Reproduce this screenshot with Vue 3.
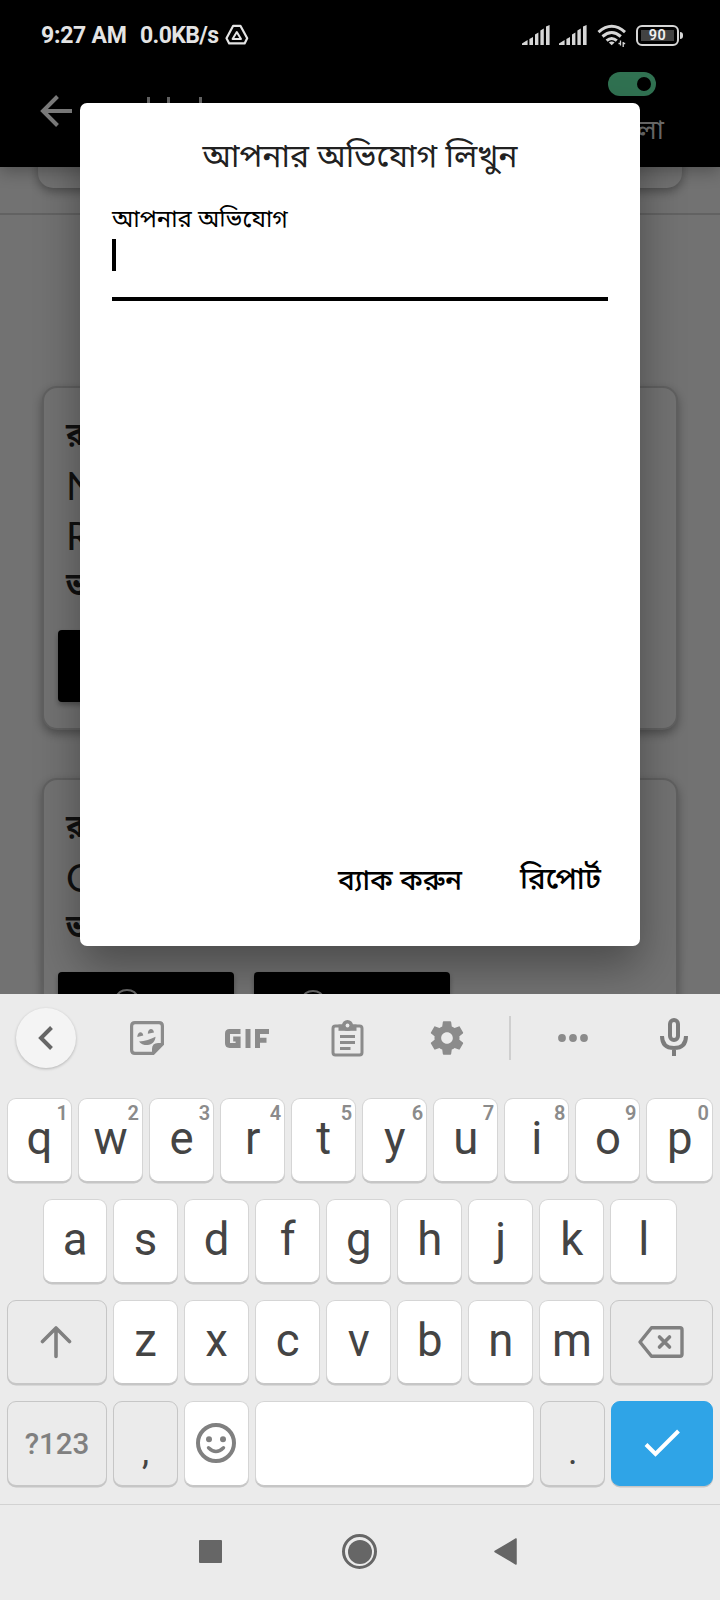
<script setup>
const topRow = [...'qwertyuiop'].map((c, i) => ({ c, n: (i + 1) % 10 }))
const midRow = [...'asdfghjkl']
const lowRow = [...'zxcvbnm']
</script>

<template>
  <div class="screen">
    <header class="top">
      <div class="status">
        <span class="time">9:27 AM</span>
        <span class="speed">0.0KB/s</span>
        <svg class="drive" width="24" height="22" viewBox="0 0 24 22" fill="none" stroke="#e4e4e4" stroke-linejoin="round">
          <path d="M8.200 1.800h7.200l6.800 12.400-2.600 5.200H4.200L1.500 14.200z" stroke-width="2.200" />
          <path d="M11.800 8l4.200 7H7.600z" stroke-width="2" />
        </svg>
        <span class="grow"></span>
        <svg v-for="k in 2" :key="k" class="signal" width="28" height="20" viewBox="0 0 28 20" fill="#d6d6d6">
          <path d="M0 20v-1.600L5.600 15v5zM7.400 14l3.600-2v8H7.400zM13 9.600l3.400-2V20H13zM18.400 5.600L21.800 3.600V20h-3.400zM24 1.600L27.600 0v20H24z" />
        </svg>
        <svg class="wifi" width="30" height="24" viewBox="0 0 30 24" fill="none" stroke="#d6d6d6" stroke-width="3">
          <path d="M1.500 8.200Q14.700-3.600 28 8.200" />
          <path d="M5.500 12.500Q14.700 4.500 23.800 12.500" />
          <path d="M9.600 16.600Q14.700 12.300 19.800 16.600" />
          <path d="M11.800 18.400Q14.700 16.400 17.600 18.400L14.700 21.200z" fill="#d6d6d6" stroke="none" />
          <path d="M23.500 16.500v5M26.200 18v5M21.500 19.500h2M26.200 19.500h2" stroke-width="1.300" />
        </svg>
        <span class="battery"><span class="level">90</span></span>
        <span class="cap"></span>
      </div>
      <div class="appbar">
        <svg class="back" width="32" height="32" viewBox="0 0 32 32" fill="none" stroke="#7a7a7a" stroke-width="4">
          <path d="M32 16H3M17.500 1.500L3 16l14.500 14.500" />
        </svg>
        <div class="title-tips"><i></i><i></i><i></i></div>
        <div class="lang">
          <span class="toggle"><span class="knob"></span></span>
          <span class="lang-name bn">বাংলা</span>
        </div>
      </div>
    </header>

    <main class="content">
      <section class="card stub"></section>
      <hr class="rule" />
      <section class="card first">
        <p class="bn strong">রক্তের গ্রুপ</p>
        <p class="latin">Name</p>
        <p class="latin">Rh</p>
        <p class="bn strong">ভর্তি</p>
        <div class="actions"><span class="action"></span></div>
      </section>
      <section class="card second">
        <p class="bn strong">রক্তের গ্রুপ</p>
        <p class="latin">O</p>
        <p class="bn strong">ভর্তি</p>
        <div class="actions">
          <span class="action"><i class="arc"></i></span>
          <span class="action wide"><i class="arc"></i></span>
        </div>
      </section>
    </main>

    <div class="dialog">
      <h1 class="bn heading">আপনার অভিযোগ লিখুন</h1>
      <label class="bn label">আপনার অভিযোগ</label>
      <div class="field"><span class="caret"></span></div>
      <div class="buttons">
        <span class="bn cancel">ব্যাক করুন</span>
        <span class="bn report">রিপোর্ট</span>
      </div>
    </div>

    <div class="keyboard">
      <div class="tools">
        <span class="round">
          <svg width="16" height="24" viewBox="0 0 16 24" fill="none" stroke="#666" stroke-width="4"><path d="M13.500 1.500L3 12l10.500 10.500" /></svg>
        </span>
        <svg class="t-sticker" width="34" height="34" viewBox="0 0 34 34">
          <path d="M5 1.600h24q3.400 0 3.400 3.400v18.200l-9.200 9.200H5q-3.400 0-3.400-3.400V5q0-3.400 3.400-3.400z" fill="none" stroke="#8b8b8b" stroke-width="3.200" />
          <path d="M22 33v-5q0-6 6-6h5L23 33z" fill="#8b8b8b" />
          <path d="M7.300 16C7.300 10.500 12.500 9.500 13.300 14.400zM17.800 12.800C17.800 7 23.300 6.500 24 11.400zM9 20.400Q18 20 25.500 15.800C25.500 20 22 24 17.500 24 13.500 24 10.500 22.800 9 20.400z" fill="#8b8b8b" />
        </svg>
        <svg class="t-gif" width="44" height="19" viewBox="0 0 44 19" fill="none" stroke="#8b8b8b" stroke-width="5">
          <path d="M15.500 2.600H4.600Q2.500 2.600 2.500 4.700v9.600q0 2.100 2.100 2.100h8.500V10H8.200" />
          <path d="M23 0v19M32.500 19V2.600H44M32 11.200h9.500" />
        </svg>
        <svg class="t-clip" width="33" height="37" viewBox="0 0 33 37" fill="none" stroke="#8b8b8b" stroke-width="3">
          <rect x="2" y="6" width="29" height="29" rx="2.500" />
          <path d="M7.500 4.500h18v6.300h-18z" fill="#8b8b8b" stroke="none" />
          <circle cx="16.500" cy="5.500" r="5.500" fill="#8b8b8b" stroke="none" /><circle cx="16.500" cy="5.500" r="1.900" fill="#ebebeb" stroke="none" />
          <path d="M9 16.600h15M9 22.400h15M9 28.400h10.500" />
        </svg>
        <svg class="t-gear" width="40" height="40" viewBox="0 0 24 24" fill="#8b8b8b"><path d="M19.430 12.980c.04-.32.07-.64.07-.98s-.03-.66-.07-.98l2.110-1.650c.19-.15.24-.42.12-.64l-2-3.460c-.12-.22-.39-.3-.61-.22l-2.490 1c-.52-.4-1.080-.73-1.690-.98l-.38-2.650C14.460 2.180 14.250 2 14 2h-4c-.25 0-.46.18-.49.42l-.38 2.650c-.61.25-1.170.59-1.690.98l-2.490-1c-.23-.09-.49 0-.61.22l-2 3.460c-.13.22-.07.49.12.64l2.110 1.650c-.04.32-.07.65-.07.98s.03.66.07.98l-2.110 1.650c-.19.15-.24.42-.12.64l2 3.460c.12.22.39.3.61.22l2.490-1c.52.4 1.080.73 1.690.98l.38 2.650c.03.24.24.42.49.42h4c.25 0 .46-.18.49-.42l.38-2.650c.61-.25 1.170-.59 1.690-.98l2.490 1c.23.09.49 0 .61-.22l2-3.460c.12-.22.07-.49-.12-.64l-2.110-1.650zM12 15.500c-1.930 0-3.500-1.570-3.500-3.500s1.570-3.500 3.500-3.500 3.500 1.570 3.500 3.500-1.570 3.500-3.500 3.500z" /></svg>
        <span class="sep"></span>
        <svg class="t-more" width="30" height="8" viewBox="0 0 30 8" fill="#8b8b8b"><circle cx="4" cy="4" r="3.900" /><circle cx="15" cy="4" r="3.900" /><circle cx="26" cy="4" r="3.900" /></svg>
        <svg class="t-mic" width="28" height="38" viewBox="0 0 28 38" fill="none" stroke="#7c7c7c" stroke-width="4">
          <rect x="10" y="2" width="8" height="20" rx="4" /><path d="M2 18q0 12 12 12t12-12M14 30v8" />
        </svg>
      </div>

      <div class="row">
        <div v-for="k in topRow" :key="k.c" class="key"><span class="ch">{{ k.c }}</span><span class="hint">{{ k.n }}</span></div>
      </div>
      <div class="row inset">
        <div v-for="c in midRow" :key="c" class="key"><span class="ch">{{ c }}</span></div>
      </div>
      <div class="row">
        <div class="key gray side">
          <svg class="shift" width="32" height="34" viewBox="0 0 32 34" fill="none" stroke="#808080" stroke-width="3.600" stroke-linecap="round" stroke-linejoin="round"><path d="M16 31.500V3M2.500 16.500L16 3l13.500 13.500" /></svg>
        </div>
        <div v-for="c in lowRow" :key="c" class="key"><span class="ch">{{ c }}</span></div>
        <div class="key gray side">
          <svg class="erase" width="48" height="34" viewBox="0 0 48 34" fill="none" stroke="#808080" stroke-width="3.400" stroke-linejoin="round"><path d="M14.500 2.700H43q2 0 2 2v24.600q0 2-2 2H14.500L3 17z" /><path d="M22.500 12l10 10M32.500 12l-10 10" stroke-width="3.600" stroke-linecap="round" /></svg>
        </div>
      </div>
      <div class="row base">
        <div class="key gray side"><span class="mode">?123</span></div>
        <div class="key gray"><span class="punct">,</span></div>
        <div class="key">
          <svg class="smile" width="40" height="40" viewBox="0 0 40 40" fill="none" stroke="#808080" stroke-width="4"><circle cx="20" cy="20" r="18" /><circle cx="13" cy="16.300" r="3" fill="#808080" stroke="none" /><circle cx="27" cy="16.300" r="3" fill="#808080" stroke="none" /><path d="M12.500 24.800q7.500 7.400 15 0" stroke-width="3.400" stroke-linecap="round" /></svg>
        </div>
        <div class="key space"></div>
        <div class="key gray"><span class="punct">.</span></div>
        <div class="key enter side">
          <svg class="done" width="36" height="28" viewBox="0 0 36 28" fill="none" stroke="#fff" stroke-width="4"><path d="M2 15.500l9.500 9.500L34.500 2" /></svg>
        </div>
      </div>

      <nav class="nav">
        <span class="recent"></span>
        <span class="home"><i></i></span>
        <svg class="prev" width="23" height="27" viewBox="0 0 23 27" fill="#666" stroke="#666" stroke-width="1.500" stroke-linejoin="round"><path d="M1 13.500L22 1v25z" /></svg>
      </nav>
    </div>
  </div>
</template>

<style>
html, body { margin: 0; background: #ebebeb; }
</style>

<style scoped>
.screen { position: relative; width: 720px; height: 1600px; overflow: hidden; background: #727272; font-family: Roboto, "Noto Sans", sans-serif; }
.screen * { box-sizing: border-box; }
.bn { font-family: "Noto Sans Bengali", "Noto Sans", Roboto, sans-serif; white-space: nowrap; }
.top { position: relative; z-index: 1; height: 167px; background: #000; box-shadow: 0 4px 16px rgba(0, 0, 0, .3); }
.status { display: flex; height: 70px; align-items: center; padding: 0 37px 0 41px; color: #e4e4e4; font-size: 23px; font-weight: 700; line-height: 28px; white-space: nowrap; }
.time { width: 99px; padding-top: 1px; letter-spacing: -.25px; }
.speed { width: 85px; padding-top: 1px; letter-spacing: -.6px; }
.grow { flex: 1; }
.signal { margin-right: 9px; }
.wifi { margin: 2px 9px 0 1px; }
.battery { display: flex; width: 43px; height: 21px; padding: 3px; border: 2.500px solid #d6d6d6; border-radius: 6px; }
.level { flex: 1; background: #424242; color: #f0f0f0; font-size: 14.500px; font-weight: 600; line-height: 11px; text-align: center; letter-spacing: .4px; }
.cap { width: 3px; height: 7px; margin-left: 1px; border-radius: 0 3px 3px 0; background: #d6d6d6; }
.appbar { display: flex; height: 97px; padding: 0 56px 0 40px; }
.back { margin-top: 25px; }
.title-tips { display: flex; gap: 16.500px; padding: 27px 0 0 75px; }
.title-tips i { width: 3.300px; height: 18px; background: #666; }
.title-tips i:last-child { margin-left: 12px; }
.lang { display: flex; flex-direction: column; align-items: flex-end; margin-left: auto; padding-top: 2px; }
.toggle { display: flex; width: 48px; height: 24px; margin-right: 8px; padding: 5px; justify-content: flex-end; border-radius: 12px; background: #307151; }
.knob { width: 14px; height: 14px; border-radius: 50%; background: #000; }
.lang-name { margin-top: 18px; color: #6b6b6b; font-size: 27px; line-height: 36px; }
.content { display: flex; flex-direction: column; }
.card { border: 2px solid #606060; border-radius: 15px; background: #727272; box-shadow: 0 4px 10px rgba(0, 0, 0, .32); }
.stub { height: 41px; margin: -20px 38px 0; border: 0; }
.rule { width: 100%; height: 2px; margin: 25px 0 171px; border: 0; background: #626262; }
.card p { height: 50px; margin: 0; color: #101010; font-size: 36px; line-height: 50px; }
.card .strong { font-weight: 700; font-size: 31px; }
.card .latin { font-family: Lato, sans-serif; font-weight: 400; font-size: 39px; line-height: 45px; }
.first { height: 344px; margin: 0 42px; padding: 25px 22px 0; }
.second { height: 400px; margin: 48px 42px 0; padding: 25px 22px 0; }
.actions { display: flex; gap: 20px; margin: 17px 0 0 -8px; }
.action { width: 176px; height: 72px; border-radius: 4px; background: #000; box-shadow: 0 3px 5px rgba(0, 0, 0, .3); }
.wide { width: 196px; }
.arc { display: block; width: 22px; height: 16px; margin: 17px 0 0 58px; border: 2px solid #666; border-radius: 50%; }
.wide .arc { margin: 18px 0 0 48px; }
.dialog { position: absolute; z-index: 2; left: 80px; top: 103px; width: 560px; height: 843px; padding: 33px 32px 0; display: flex; flex-direction: column; border-radius: 7px; background: #fff; box-shadow: 0 20px 44px rgba(0, 0, 0, .34); }
.heading { margin: 0; color: #212121; font-size: 31.900px; font-weight: 400; line-height: 46px; text-align: center; }
.label { margin-top: 22px; color: #000; font-size: 23.900px; line-height: 34px; height: 34px; }
.field { height: 63px; padding-top: 1px; border-bottom: 4px solid #000; }
.caret { display: block; width: 4px; height: 32px; background: #000; }
.buttons { display: flex; justify-content: flex-end; align-items: flex-start; gap: 58px; margin-top: 561px; padding-right: 7px; color: #000; font-size: 28px; line-height: 40px; font-weight: 500; }
.cancel { padding-top: 1px; }
.report { font-size: 29.500px; }
.keyboard { position: absolute; z-index: 3; left: 0; top: 994px; width: 720px; height: 606px; background: #ebebeb; }
.tools { display: flex; align-items: center; height: 88px; padding-left: 16px; margin-bottom: 16px; }
.round { display: flex; align-items: center; justify-content: center; width: 60px; height: 60px; border-radius: 50%; background: #f4f4f4; box-shadow: 0 1px 3px rgba(0, 0, 0, .24); }
.t-sticker { margin-left: 54px; }
.t-gif { margin-left: 61px; }
.t-clip { margin-left: 61.500px; }
.t-gear { margin-left: 63.500px; }
.sep { width: 2px; height: 44px; margin-left: 42px; background: #cfcfcf; }
.t-more { margin-left: 47px; }
.t-mic { margin-left: 72px; margin-top: -2px; }
.row { display: flex; height: 85px; margin-bottom: 16px; padding: 0 7px; gap: 6.050px; }
.key { position: relative; display: flex; flex: 0 0 65px; align-items: center; justify-content: center; height: 84px; border: 1px solid #d5d5d5; border-bottom-color: #c6c6c6; border-radius: 9px; background: #fff; box-shadow: 0 1.500px 0 #c6c6c6; color: #444; }
.inset { padding: 0 43px; }
.inset .key:first-child { flex-basis: 64px; }
.row .key:last-child { flex: 1; }
.gray { border-color: #c6c6c6; background: #ebebeb; }
.side { flex-basis: 100px; }
.space { flex-basis: 279px; }
.base .key { height: 85px; }
.base .enter { border-color: #2fa4e7; background: #2fa4e7; }
.shift { margin-right: 2px; }
.erase { margin-right: 1px; margin-top: -1px; }
.smile { margin-right: 1px; margin-top: -1.500px; }
.done { margin-top: -1px; }
.ch { margin-top: -2px; font-size: 45.500px; line-height: 60px; }
.hint { position: absolute; top: 2px; right: 3px; color: #8b8b8b; font-size: 20px; font-weight: 600; line-height: 24px; }
.mode { color: #808080; font-size: 29.500px; font-weight: 500; }
.punct { margin-top: 17px; font-size: 36px; line-height: 50px; }
.nav { display: flex; align-items: center; height: 97px; margin-top: 18px; padding: 0 0 3px 199px; border-top: 1px solid #d2d2d2; }
.recent { width: 23px; height: 23px; border-radius: 1px; background: #666; }
.home { display: flex; align-items: center; justify-content: center; width: 35px; height: 35px; margin-left: 120px; border: 3px solid #666; border-radius: 50%; }
.home i { width: 24px; height: 24px; border-radius: 50%; background: #666; }
.prev { margin-left: 117px; }
</style>
